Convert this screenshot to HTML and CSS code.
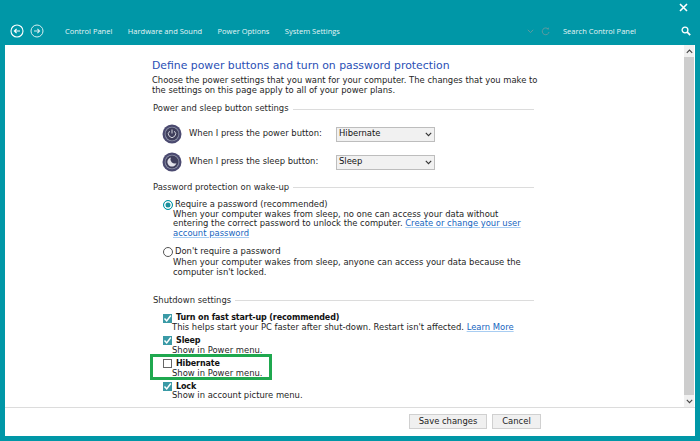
FILE: index.html
```html
<!DOCTYPE html>
<html lang="en">
<head>
<meta charset="utf-8">
<title>Power Options</title>
<link rel="stylesheet" href="styles.css">
</head>
<body>
<div class="window">
  <header class="header">
    <div class="titlebar">
      <svg class="close" viewBox="0 0 9 9" width="9" height="9"><path d="M1 1l7 7M8 1L1 8" stroke="#fff" stroke-width="1.6" fill="none"/></svg>
    </div>
    <nav class="navbar">
      <svg class="nav-btn" viewBox="0 0 14 14" width="14" height="14"><circle cx="7" cy="7" r="6" fill="none" stroke="#fff" stroke-width="1.1"/><path d="M10 7H4.4M6.6 4.8L4.4 7l2.2 2.2" fill="none" stroke="#fff" stroke-width="1.2"/></svg>
      <svg class="nav-btn nav-btn-dim" viewBox="0 0 14 14" width="14" height="14"><circle cx="7" cy="7" r="6" fill="none" stroke="#d5eef0" stroke-width="1"/><path d="M4 7h5.6M7.4 4.8L9.6 7 7.4 9.2" fill="none" stroke="#d5eef0" stroke-width="1.1"/></svg>
      <ul class="crumbs">
        <li>Control Panel</li>
        <li>Hardware and Sound</li>
        <li>Power Options</li>
        <li>System Settings</li>
      </ul>
      <svg class="chev" viewBox="0 0 7 5" width="7" height="5"><path d="M.8.8l2.7 2.8L6.200.8" fill="none" stroke="#5f9aa0" stroke-width="1"/></svg>
      <svg class="refresh" viewBox="0 0 9 9" width="9" height="9"><path d="M7.300 2.200A3.400 3.400 0 1 0 8 5" fill="none" stroke="#5f9aa0" stroke-width="1"/><path d="M5.600 2.300h2.200V.2z" fill="#5f9aa0"/></svg>
      <span class="search-label">Search Control Panel</span>
      <svg class="search-icon" viewBox="0 0 10 10" width="10" height="10"><circle cx="4" cy="4" r="2.900" fill="none" stroke="#fff" stroke-width="1.300"/><path d="M6.200 6.200l3 3" stroke="#fff" stroke-width="1.700"/></svg>
    </nav>
  </header>

  <div class="panel">
    <div class="body-row">
      <main class="content">
        <h1 class="title">Define power buttons and turn on password protection</h1>
        <p class="intro">Choose the power settings that you want for your computer. The changes that you make to the settings on this page apply to all of your power plans.</p>

        <div class="section-head section-power"><span>Power and sleep button settings</span><i></i></div>
        <div class="button-row button-row-first">
          <svg class="orb" viewBox="0 0 20 20" width="20" height="20"><circle cx="10" cy="10" r="9.500" fill="#4b4a70"/><circle cx="10" cy="10" r="7.300" fill="#8d93a8"/><circle cx="10" cy="10" r="6.500" fill="#3f3e5c"/><path d="M7.600 7.200a3.600 3.600 0 1 0 4.800 0" fill="none" stroke="#d5d6de" stroke-width="1"/><path d="M10 5.500v4" stroke="#d5d6de" stroke-width="1"/></svg>
          <span class="button-label">When I press the power button:</span>
          <span class="select"><span>Hibernate</span><svg viewBox="0 0 7 5" width="7" height="5"><path d="M.8.800l2.700 2.800L6.200.800" fill="none" stroke="#333" stroke-width="1.100"/></svg></span>
        </div>
        <div class="button-row">
          <svg class="orb" viewBox="0 0 20 20" width="20" height="20"><circle cx="10" cy="10" r="9.500" fill="#4b4a70"/><circle cx="10" cy="10" r="7.300" fill="#8d93a8"/><circle cx="10" cy="10" r="6.500" fill="#3f3e5c"/><path d="M8.800 5.500a4.600 4.600 0 1 0 5.600 5.700A4.300 4.300 0 0 1 8.800 5.500z" fill="#e3e3ea"/></svg>
          <span class="button-label">When I press the sleep button:</span>
          <span class="select"><span>Sleep</span><svg viewBox="0 0 7 5" width="7" height="5"><path d="M.8.800l2.700 2.800L6.200.800" fill="none" stroke="#333" stroke-width="1.100"/></svg></span>
        </div>

        <div class="section-head section-password"><span>Password protection on wake-up</span><i></i></div>
        <div class="option">
          <span class="radio radio-on"></span>
          <div class="option-text">
            <div class="option-title">Require a password (recommended)</div>
            <p>When your computer wakes from sleep, no one can access your data without entering the correct password to unlock the computer. <a href="#">Create or change your user account password</a></p>
          </div>
        </div>
        <div class="option option-second">
          <span class="radio"></span>
          <div class="option-text">
            <div class="option-title">Don't require a password</div>
            <p>When your computer wakes from sleep, anyone can access your data because the computer isn't locked.</p>
          </div>
        </div>

        <div class="section-head section-shutdown"><span>Shutdown settings</span><i></i></div>
        <div class="check-row">
          <div class="check-line"><span class="check check-on"><svg viewBox="0 0 9 9" width="9" height="9"><path d="M1.500 4.500l2.200 2.400L7.800 1.500" fill="none" stroke="#fff" stroke-width="1.500"/></svg></span><b>Turn on fast start-up (recommended)</b></div>
          <p>This helps start your PC faster after shut-down. Restart isn't affected. <a href="#">Learn More</a></p>
        </div>
        <div class="check-row">
          <div class="check-line"><span class="check check-on"><svg viewBox="0 0 9 9" width="9" height="9"><path d="M1.500 4.500l2.200 2.400L7.800 1.500" fill="none" stroke="#fff" stroke-width="1.500"/></svg></span><b>Sleep</b></div>
          <p>Show in Power menu.</p>
        </div>
        <div class="check-row check-row-marked">
          <div class="check-line"><span class="check"></span><b>Hibernate</b></div>
          <p>Show in Power menu.</p>
        </div>
        <div class="check-row">
          <div class="check-line"><span class="check check-on"><svg viewBox="0 0 9 9" width="9" height="9"><path d="M1.500 4.500l2.200 2.400L7.800 1.500" fill="none" stroke="#fff" stroke-width="1.500"/></svg></span><b>Lock</b></div>
          <p>Show in account picture menu.</p>
        </div>
      </main>
      <div class="scrollbar">
        <span class="scroll-btn"><svg viewBox="0 0 7 5" width="7" height="5"><path d="M.8 3.800l2.700-2.800 2.700 2.800" fill="none" stroke="#444" stroke-width="1.100"/></svg></span>
        <span class="scroll-thumb"></span>
        <span class="scroll-btn"><svg viewBox="0 0 7 5" width="7" height="5"><path d="M.8.800l2.700 2.800L6.200.800" fill="none" stroke="#444" stroke-width="1.100"/></svg></span>
      </div>
    </div>
    <footer class="footer">
      <button class="btn btn-save" type="button">Save changes</button>
      <button class="btn btn-cancel" type="button">Cancel</button>
    </footer>
  </div>
</div>
</body>
</html>
```
FILE: styles.css
```css
* { box-sizing: border-box; }
html, body { margin: 0; padding: 0; }
body { width: 700px; height: 441px; overflow: hidden; background: #0097a7; font-family: "DejaVu Sans", sans-serif; color: #1e1e1e; }
.window { width: 700px; height: 441px; display: flex; flex-direction: column; padding: 0 5px 5px; }

.header { height: 45px; flex: none; margin: 0 -5px; padding: 0 5px; display: flex; flex-direction: column; }
.titlebar { height: 23px; display: flex; justify-content: flex-end; align-items: flex-start; padding: 3px 7px 0 0; }
.navbar { display: flex; align-items: center; height: 16px; padding-left: 5px; color: #e6f5f6; font-family: "Open Sans", sans-serif; font-size: 7.500px; }
.nav-btn { flex: none; margin-right: 6px; }
.crumbs { list-style: none; margin: 0 0 0 15px; padding: 0; display: flex; gap: 15.500px; flex: none; width: 462px; }
.chev { flex: none; }
.refresh { margin-left: 7px; flex: none; }
.search-label { margin-left: 13px; flex: none; width: 118px; }
.search-icon { flex: none; }

.panel { flex: 1; background: #fff; display: flex; flex-direction: column; min-height: 0; }
.body-row { flex: 1; display: flex; min-height: 0; }
.content { flex: 1; padding: 14px 0 0 147px; font-size: 8.420px; line-height: 9.700px; min-width: 0; }
.title { margin: 0; font-weight: 400; font-size: 10.850px; line-height: 14px; color: #2a4fb5; }
.intro { margin: 3px 0 0; width: 392px; }
.section-head { display: flex; align-items: center; gap: 4px; width: 381px; margin-left: 1px; color: #2b2b2b; }
.section-head span { flex: none; }
.section-head i { flex: 1; height: 1px; background: #dcdcdc; }
.section-power { margin-top: 9px; }
.section-password { margin-top: 11px; }
.section-shutdown { margin-top: 18px; }

.button-row { display: flex; align-items: center; height: 20px; margin: 8px 0 0 10px; }
.button-row-first { margin-top: 10px; }
.orb { flex: none; }
.button-label { width: 147px; margin-left: 7px; flex: none; }
.select { width: 99px; height: 15px; flex: none; display: flex; align-items: center; justify-content: space-between; padding: 0 2px 0 2px; background: #f1f1f1; border: 1px solid #bdbdbd; color: #111; }

.option { display: flex; margin: 7px 0 0 11px; }
.option-second { margin-top: 8px; }
.radio { width: 10px; height: 10px; flex: none; border-radius: 50%; border: 1px solid #555; background: #fff; position: relative; }
.radio-on { border-color: #0097a7; box-shadow: inset 0 0 0 1.500px #fff; background: #1b8f9c; }
.option-title { margin-left: 2px; }
.option-text p { margin: 0; width: 355px; }
.option-second p { margin-top: 2px; }
a { color: #1565c0; text-decoration: underline; text-decoration-color: #a8cdf2; }

.check-row { margin: 3.300px 0 0 11px; width: 360px; position: relative; }
.section-shutdown + .check-row { margin-top: 8px; }
.check-line { display: flex; align-items: center; }
.check-line b { margin-left: 4px; color: #111; font-size: 8px; letter-spacing: -0.130px; }
.check-row p { margin: 0 0 0 9px; white-space: nowrap; }
.check { width: 9px; height: 9px; flex: none; border: 1px solid #666; background: #fff; display: block; }
.check-on { border: 0; background: #3a9aa6; }
.check svg { display: block; }
.check-row-marked::after { content: ""; box-sizing: border-box; position: absolute; left: -13px; top: -5px; width: 122px; height: 26px; border: 3px solid #1fa84f; pointer-events: none; }

.scrollbar { width: 10px; margin-right: 1px; flex: none; display: flex; flex-direction: column; background: #f0f0f0; }
.scroll-btn { height: 12px; flex: none; display: flex; align-items: center; justify-content: center; background: #f0f0f0; }
.scroll-thumb { flex: 1; background: #cdcdcd; }

.footer { flex: none; height: 29px; border-top: 1px solid #dcdcdc; display: flex; align-items: flex-start; gap: 5px; padding: 6px 0 0 404px; }
.btn { height: 15px; padding: 0; background: #f0f0f0; border: 1px solid #d0d0d0; font-family: "DejaVu Sans", sans-serif; font-size: 8.420px; line-height: 13px; color: #222; }
.btn-save { width: 78px; }
.btn-cancel { width: 49px; }
```
